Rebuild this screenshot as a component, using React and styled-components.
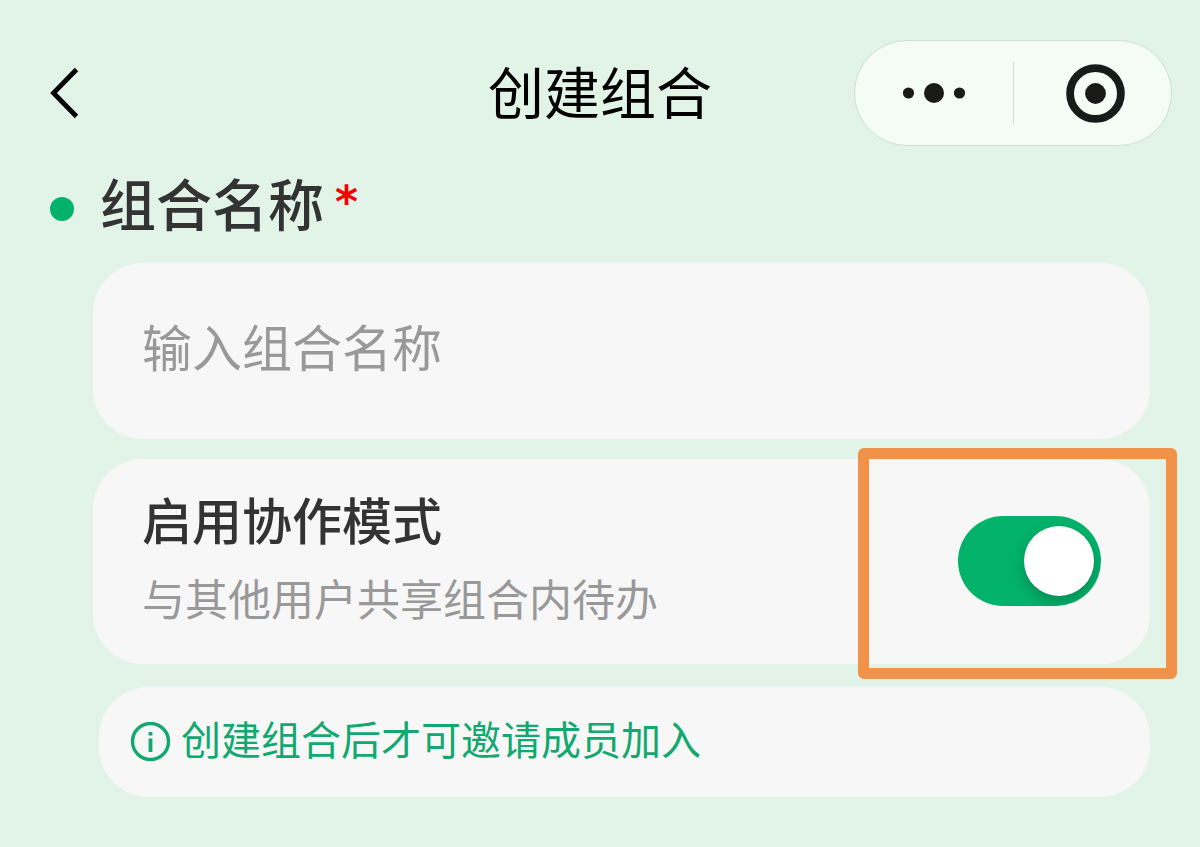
import React, { useState } from "react"
import styled, { createGlobalStyle, ThemeProvider } from "styled-components"

const theme = {
  colors: {
    page: "#e2f4e8",
    card: "#f7f7f7",
    primary: "#03b26a",
    hint: "#12a870",
    text: "#333333",
    muted: "#999999",
    required: "#f60000",
    marker: "#f0924a",
  },
}

const GlobalStyle = createGlobalStyle`
  * {
    box-sizing: border-box;
  }
  body {
    margin: 0;
    background: ${({ theme }) => theme.colors.page};
    font-family: "Noto Sans CJK SC", "Noto Sans", sans-serif;
  }
  button {
    border: 0;
    padding: 0;
    background: none;
    cursor: pointer;
  }
  svg {
    display: block;
  }
`

const Header = styled.header`
  display: grid;
  grid-template-columns: 1fr auto 1fr;
  align-items: center;
  padding: 40px 28px 0 48px;
`

const BackButton = styled.button`
  justify-self: start;
`

const Title = styled.h1`
  margin: 0;
  padding: 0 20px 6px 0;
  color: #000;
  font-size: 56px;
  font-weight: 400;
  line-height: 80px;
`

const Capsule = styled.div`
  display: flex;
  justify-self: end;
  align-items: center;
  width: 318px;
  height: 106px;
  border: 1px solid #cfded5;
  border-radius: 53px;
  background: #f4fcf5;
`

const CapsuleButton = styled.button`
  display: flex;
  flex: 1;
  align-items: center;
  justify-content: center;
  height: 100%;
`

const CapsuleDivider = styled.span`
  width: 1px;
  height: 64px;
  background: #d3dfd7;
`

const Form = styled.form`
  padding: 20px 50px 50px;
`

const LabelRow = styled.div`
  display: flex;
  align-items: center;
  gap: 26px;
  height: 80px;
`

const Dot = styled.span`
  width: 24px;
  height: 24px;
  margin-top: 6px;
  border-radius: 50%;
  background: ${({ theme }) => theme.colors.primary};
`

const Label = styled.label`
  display: flex;
  padding-bottom: 8px;
  color: ${({ theme }) => theme.colors.text};
  font-size: 56px;
  font-weight: 500;
  line-height: 80px;
`

const Required = styled.span`
  margin-left: 11px;
  color: ${({ theme }) => theme.colors.required};
  font-family: "DejaVu Sans", sans-serif;
  font-size: 44px;
  font-weight: 700;
`

const Fields = styled.div`
  display: flex;
  flex-direction: column;
  gap: 20px;
  margin-top: 17px;
  padding-left: 43px;
`

const TextInput = styled.input`
  width: 100%;
  height: 176px;
  padding: 0 49px 12px;
  border: 0;
  border-radius: 50px;
  outline: 0;
  background: ${({ theme }) => theme.colors.card};
  color: ${({ theme }) => theme.colors.text};
  font-family: inherit;
  font-size: 50px;

  &::placeholder {
    color: ${({ theme }) => theme.colors.muted};
    opacity: 1;
  }
`

const SwitchCard = styled.div`
  position: relative;
  display: flex;
  align-items: center;
  justify-content: space-between;
  min-height: 205px;
  padding: 0 49px 2px;
  border-radius: 50px;
  background: ${({ theme }) => theme.colors.card};
`

const SwitchText = styled.label`
  display: flex;
  flex-direction: column;
  gap: 8px;
  padding-bottom: 12px;
`

const SwitchTitle = styled.span`
  color: ${({ theme }) => theme.colors.text};
  font-size: 50px;
  font-weight: 500;
  line-height: 76px;
`

const SwitchNote = styled.span`
  color: ${({ theme }) => theme.colors.muted};
  font-size: 43px;
  line-height: 66px;
`

const Switch = styled.input`
  display: flex;
  flex: none;
  appearance: none;
  width: 143px;
  height: 90px;
  margin: 0;
  padding: 10px 7px;
  overflow: hidden;
  border-radius: 45px;
  background: #d8d8d8;
  cursor: pointer;

  &:checked {
    justify-content: flex-end;
    background: ${({ theme }) => theme.colors.primary};
  }

  &::before {
    content: "";
    width: 70px;
    height: 70px;
    border-radius: 50%;
    background: #fff;
    box-shadow: 0 6px 14px rgba(0, 0, 0, 0.22);
  }
`

// frame drawn over the switch and past the edges of its card
const Marker = styled.div`
  position: absolute;
  top: -11px;
  right: -27px;
  bottom: -15px;
  width: 319px;
  border: 11px solid ${({ theme }) => theme.colors.marker};
  border-radius: 6px;
  pointer-events: none;
`

const Hint = styled.p`
  display: flex;
  align-items: center;
  gap: 11px;
  min-height: 110px;
  margin: 3px 0 0 6px;
  padding: 0 31px;
  border-radius: 50px;
  background: ${({ theme }) => theme.colors.card};
  color: ${({ theme }) => theme.colors.hint};
  font-size: 40px;
  line-height: 60px;
`

const HintText = styled.span`
  padding-bottom: 8px;
`

const BackIcon = () => (
  <svg width="32" height="52" viewBox="0 0 32 52" fill="none">
    <path d="M28.5 2.5L5.5 26L28.5 49.5" stroke="#000" strokeWidth="4.8" />
  </svg>
)

const MoreIcon = () => (
  <svg width="64" height="22" viewBox="0 0 64 22" fill="#1a1a18">
    <circle cx="6.5" cy="11" r="5.6" />
    <circle cx="32" cy="11" r="10" />
    <circle cx="57.5" cy="11" r="5.6" />
  </svg>
)

const CloseIcon = () => (
  <svg width="68" height="60" viewBox="0 0 68 60" fill="none">
    <circle cx="37.5" cy="30.5" r="25.4" stroke="#151c19" strokeWidth="7.8" />
    <circle cx="37.5" cy="30.5" r="10.4" fill="#1a1a18" />
  </svg>
)

const InfoIcon = () => (
  <svg width="40" height="40" viewBox="0 0 40 40" fill="none">
    <circle cx="20.5" cy="19.5" r="18" stroke="currentColor" strokeWidth="3.4" />
    <path d="M20.5 10V13.5M20.5 16.5V30" stroke="currentColor" strokeWidth="3.8" />
  </svg>
)

const App = () => {
  const [name, setName] = useState("")
  const [shared, setShared] = useState(true)

  return (
    <ThemeProvider theme={theme}>
      <GlobalStyle />
      <Header>
        <BackButton type="button" aria-label="返回">
          <BackIcon />
        </BackButton>
        <Title>创建组合</Title>
        <Capsule>
          <CapsuleButton type="button" aria-label="更多">
            <MoreIcon />
          </CapsuleButton>
          <CapsuleDivider />
          <CapsuleButton type="button" aria-label="关闭">
            <CloseIcon />
          </CapsuleButton>
        </Capsule>
      </Header>
      <Form onSubmit={e => e.preventDefault()}>
        <LabelRow>
          <Dot />
          <Label htmlFor="name">
            组合名称
            <Required>*</Required>
          </Label>
        </LabelRow>
        <Fields>
          <TextInput
            id="name"
            type="text"
            name="name"
            placeholder="输入组合名称"
            value={name}
            onChange={e => setName(e.target.value)}
          />
          <SwitchCard>
            <SwitchText htmlFor="shared">
              <SwitchTitle>启用协作模式</SwitchTitle>
              <SwitchNote>与其他用户共享组合内待办</SwitchNote>
            </SwitchText>
            <Switch
              id="shared"
              type="checkbox"
              name="shared"
              checked={shared}
              onChange={e => setShared(e.target.checked)}
            />
            <Marker />
          </SwitchCard>
          <Hint>
            <InfoIcon />
            <HintText>创建组合后才可邀请成员加入</HintText>
          </Hint>
        </Fields>
      </Form>
    </ThemeProvider>
  )
}

export default App
